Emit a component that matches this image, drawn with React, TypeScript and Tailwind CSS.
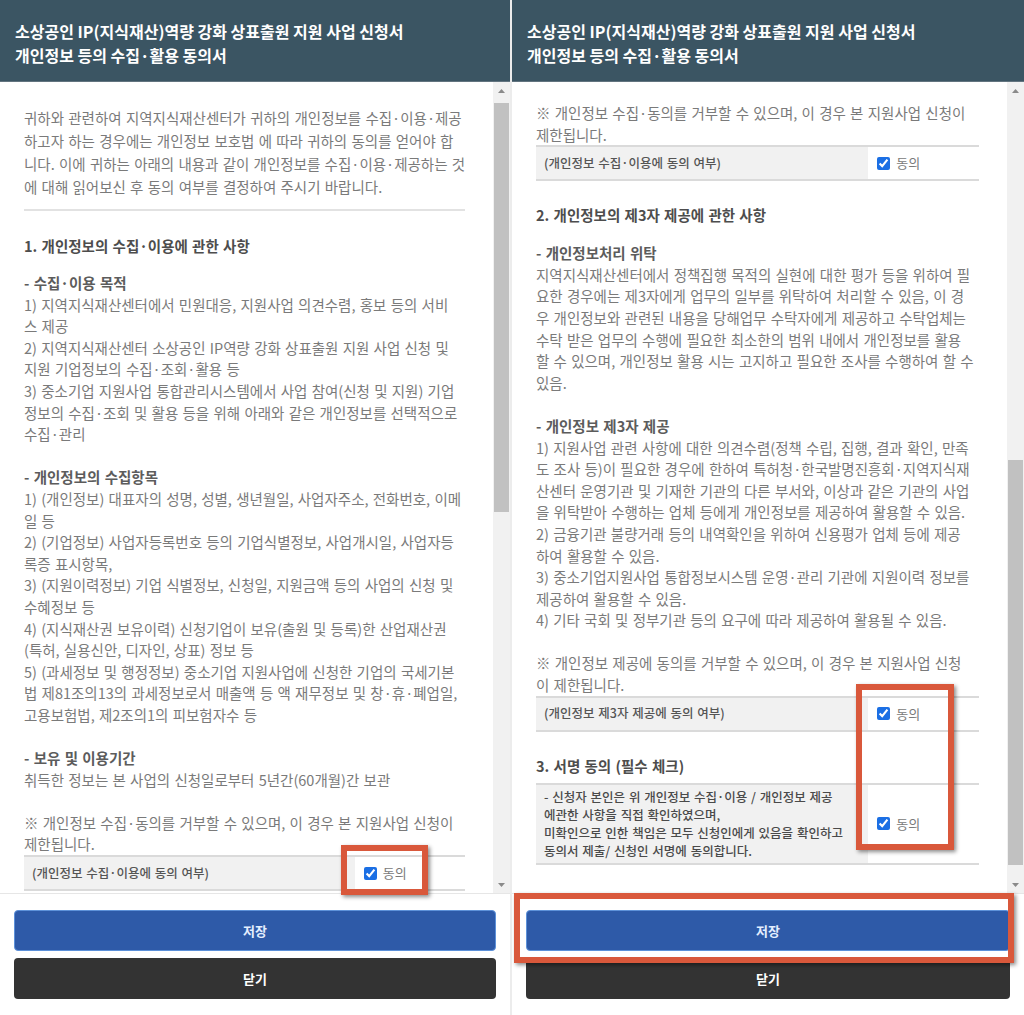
import React from "react";

// Shared text style for the body copy of the consent form
const body = "text-[14.5px] leading-[21.6px] text-[#7a7a7a] [word-spacing:1px]";

interface BlockProps {
  title?: string;
  lines: string[];
  className?: string;
}

// A titled block of lines ("- 수집·이용 목적" + items)
const Block: React.FC<BlockProps> = ({ title, lines, className = "" }) => (
  <div className={`${body} ${className}`}>
    {title && (
      <div className="whitespace-nowrap font-bold text-[#5c5c5c]">{title}</div>
    )}
    {lines.map((line, i) => (
      <div key={i} className="whitespace-nowrap">
        {line}
      </div>
    ))}
  </div>
);

const Heading: React.FC<{ text: string; className?: string }> = ({ text, className = "" }) => (
  <div
    className={`whitespace-nowrap text-[14.5px] leading-[22px] font-bold text-[#4d4d4d] [word-spacing:1px] ${className}`}
  >
    {text}
  </div>
);

interface AgreeRowProps {
  lines: string[];
  tall?: boolean;
  className?: string;
}

// Gray label cell + checkbox cell
const AgreeRow: React.FC<AgreeRowProps> = ({ lines, tall, className = "" }) => (
  <div
    className={`flex border-y-2 border-[#dadada] ${tall ? "h-[82px]" : "h-[36px]"} ${className}`}
  >
    <div
      className={`w-[75%] bg-[#f1f1f1] pl-[8px] flex flex-col justify-center [word-spacing:1px] ${
        tall
          ? "text-[12.5px] leading-[18px] text-[#4a4a4a] font-medium"
          : "text-[12.5px] text-[#555] font-medium"
      }`}
    >
      {lines.map((line, i) => (
        <div key={i} className="whitespace-nowrap">
          {line}
        </div>
      ))}
    </div>
    <div className="flex-1 bg-white flex items-center pl-[9px] gap-[6px]">
      <input
        type="checkbox"
        checked
        readOnly
        className="m-0 w-[13px] h-[13px] accent-[#1b6fe4]"
      />
      <span className="text-[13px] text-[#7a7a7a]">동의</span>
    </div>
  </div>
);

// Classic scrollbar drawn beside the scroll area
const ScrollBar: React.FC<{ thumbClass: string }> = ({ thumbClass }) => (
  <div className="w-[17px] bg-[#f1f1f1] flex flex-col">
    <div className="h-[17px] flex items-center justify-center">
      <svg width="7" height="4" viewBox="0 0 7 4">
        <path d="M3.5 0L7 4H0z" fill="#8a8a8a" />
      </svg>
    </div>
    <div className={`ml-[1px] w-[15px] bg-[#c1c1c1] ${thumbClass}`} />
    <div className="flex-1" />
    <div className="h-[17px] flex items-center justify-center">
      <svg width="7" height="4" viewBox="0 0 7 4">
        <path d="M0 0H7L3.5 4z" fill="#8a8a8a" />
      </svg>
    </div>
  </div>
);

interface PanelProps {
  className: string;
  thumbClass: string;
  contentClass: string;
  children: React.ReactNode;
}

const Panel: React.FC<PanelProps> = ({ className, thumbClass, contentClass, children }) => (
  <div className={`flex flex-col bg-white ${className}`}>
    <header className="h-[82px] bg-[#3b5563] border-b border-[#62747f] pl-[15px] pt-[19px] text-white font-bold text-[16px] leading-[24px]">
      <div className="whitespace-nowrap">소상공인 IP(지식재산)역량 강화 상표출원 지원 사업 신청서</div>
      <div className="whitespace-nowrap">개인정보 등의 수집·활용 동의서</div>
    </header>
    <div className="flex h-[811px]">
      <div className={`flex-1 overflow-hidden pl-6 pr-7 ${contentClass}`}>{children}</div>
      <ScrollBar thumbClass={thumbClass} />
    </div>
    <footer className="flex-1 border-t border-[#e6e6e6] px-[14px] pt-[16px] flex flex-col gap-[7px]">
      <button className="h-[41px] rounded-[4px] bg-[#2e5aa8] border border-[#5d91d9] text-[13px] font-bold text-[#e4eeff]">
        저장
      </button>
      <button className="h-[41px] rounded-[4px] bg-[#333333] text-[13px] font-bold text-white">
        닫기
      </button>
    </footer>
  </div>
);

const NOTE_COLLECT = [
  "※ 개인정보 수집·동의를 거부할 수 있으며, 이 경우 본 지원사업 신청이",
  "제한됩니다.",
];

export default function App() {
  return (
    <div className="relative flex gap-[2px] w-[1024px] h-[1015px] overflow-hidden bg-[#ececec] font-['Noto_Sans_CJK_KR','Noto_Sans',sans-serif]">
      {/* Left: scrolled to the top */}
      <Panel className="w-[510px]" thumbClass="mt-[4px] h-[409px]" contentClass="pt-[24px]">
        <div className="text-[14.5px] leading-[23px] text-[#7a7a7a] [word-spacing:1px]">
          <div className="whitespace-nowrap">귀하와 관련하여 지역지식재산센터가 귀하의 개인정보를 수집·이용·제공</div>
          <div className="whitespace-nowrap">하고자 하는 경우에는 개인정보 보호법 에 따라 귀하의 동의를 얻어야 합</div>
          <div className="whitespace-nowrap">니다. 이에 귀하는 아래의 내용과 같이 개인정보를 수집·이용·제공하는 것</div>
          <div className="whitespace-nowrap">에 대해 읽어보신 후 동의 여부를 결정하여 주시기 바랍니다.</div>
        </div>
        <div className="mt-[11px] h-[2px] bg-[#e2e2e2]" />
        <Heading text="1. 개인정보의 수집·이용에 관한 사항" className="mt-[24px]" />
        <Block
          className="mt-[15px]"
          title="- 수집·이용 목적"
          lines={[
            "1) 지역지식재산센터에서 민원대응, 지원사업 의견수렴, 홍보 등의 서비",
            "스 제공",
            "2) 지역지식재산센터 소상공인 IP역량 강화 상표출원 지원 사업 신청 및",
            "지원 기업정보의 수집·조회·활용 등",
            "3) 중소기업 지원사업 통합관리시스템에서 사업 참여(신청 및 지원) 기업",
            "정보의 수집·조회 및 활용 등을 위해 아래와 같은 개인정보를 선택적으로",
            "수집·관리",
          ]}
        />
        <Block
          className="mt-[21.6px]"
          title="- 개인정보의 수집항목"
          lines={[
            "1) (개인정보) 대표자의 성명, 성별, 생년월일, 사업자주소, 전화번호, 이메",
            "일 등",
            "2) (기업정보) 사업자등록번호 등의 기업식별정보, 사업개시일, 사업자등",
            "록증 표시항목,",
            "3) (지원이력정보) 기업 식별정보, 신청일, 지원금액 등의 사업의 신청 및",
            "수혜정보 등",
            "4) (지식재산권 보유이력) 신청기업이 보유(출원 및 등록)한 산업재산권",
            "(특허, 실용신안, 디자인, 상표) 정보 등",
            "5) (과세정보 및 행정정보) 중소기업 지원사업에 신청한 기업의 국세기본",
            "법 제81조의13의 과세정보로서 매출액 등 액 재무정보 및 창·휴·폐업일,",
            "고용보험법, 제2조의1의 피보험자수 등",
          ]}
        />
        <Block
          className="mt-[21.6px]"
          title="- 보유 및 이용기간"
          lines={["취득한 정보는 본 사업의 신청일로부터 5년간(60개월)간 보관"]}
        />
        <Block className="mt-[21.6px]" lines={NOTE_COLLECT} />
        <AgreeRow lines={["(개인정보 수집·이용에 동의 여부)"]} />
      </Panel>

      {/* Right: scrolled further down */}
      <Panel className="flex-1" thumbClass="mt-[361px] h-[405px]" contentClass="pt-[20px]">
        <Block lines={NOTE_COLLECT} />
        <AgreeRow lines={["(개인정보 수집·이용에 동의 여부)"]} />
        <Heading text="2. 개인정보의 제3자 제공에 관한 사항" className="mt-[23px]" />
        <Block
          className="mt-[16px]"
          title="- 개인정보처리 위탁"
          lines={[
            "지역지식재산센터에서 정책집행 목적의 실현에 대한 평가 등을 위하여 필",
            "요한 경우에는 제3자에게 업무의 일부를 위탁하여 처리할 수 있음, 이 경",
            "우 개인정보와 관련된 내용을 당해업무 수탁자에게 제공하고 수탁업체는",
            "수탁 받은 업무의 수행에 필요한 최소한의 범위 내에서 개인정보를 활용",
            "할 수 있으며, 개인정보 활용 시는 고지하고 필요한 조사를 수행하여 할 수",
            "있음.",
          ]}
        />
        <Block
          className="mt-[21.6px]"
          title="- 개인정보 제3자 제공"
          lines={[
            "1) 지원사업 관련 사항에 대한 의견수렴(정책 수립, 집행, 결과 확인, 만족",
            "도 조사 등)이 필요한 경우에 한하여 특허청·한국발명진흥회·지역지식재",
            "산센터 운영기관 및 기재한 기관의 다른 부서와, 이상과 같은 기관의 사업",
            "을 위탁받아 수행하는 업체 등에게 개인정보를 제공하여 활용할 수 있음.",
            "2) 금융기관 불량거래 등의 내역확인을 위하여 신용평가 업체 등에 제공",
            "하여 활용할 수 있음.",
            "3) 중소기업지원사업 통합정보시스템 운영·관리 기관에 지원이력 정보를",
            "제공하여 활용할 수 있음.",
            "4) 기타 국회 및 정부기관 등의 요구에 따라 제공하여 활용될 수 있음.",
          ]}
        />
        <Block
          className="mt-[21.6px]"
          lines={[
            "※ 개인정보 제공에 동의를 거부할 수 있으며, 이 경우 본 지원사업 신청",
            "이 제한됩니다.",
          ]}
        />
        <AgreeRow lines={["(개인정보 제3자 제공에 동의 여부)"]} />
        <Heading text="3. 서명 동의 (필수 체크)" className="mt-[23px]" />
        <AgreeRow
          tall
          className="mt-[6px]"
          lines={[
            "- 신청자 본인은 위 개인정보 수집·이용 / 개인정보 제공",
            "에관한 사항을 직접 확인하였으며,",
            "미확인으로 인한 책임은 모두 신청인에게 있음을 확인하고",
            "동의서 제출/ 신청인 서명에 동의합니다.",
          ]}
        />
      </Panel>

      {/* Red annotation boxes drawn over the screenshot */}
      <div className="absolute left-[341px] top-[845px] w-[87px] h-[50px] border-[6px] border-[#d9583b] shadow-[2px_2px_4px_rgba(0,0,0,0.45)]" />
      <div className="absolute left-[856px] top-[684px] w-[98px] h-[166px] border-[6px] border-[#d9583b] shadow-[2px_2px_4px_rgba(0,0,0,0.45)]" />
      <div className="absolute left-[514px] top-[893px] w-[500px] h-[70px] border-[6px] border-[#d9583b] shadow-[2px_2px_4px_rgba(0,0,0,0.45)]" />
    </div>
  );
}
